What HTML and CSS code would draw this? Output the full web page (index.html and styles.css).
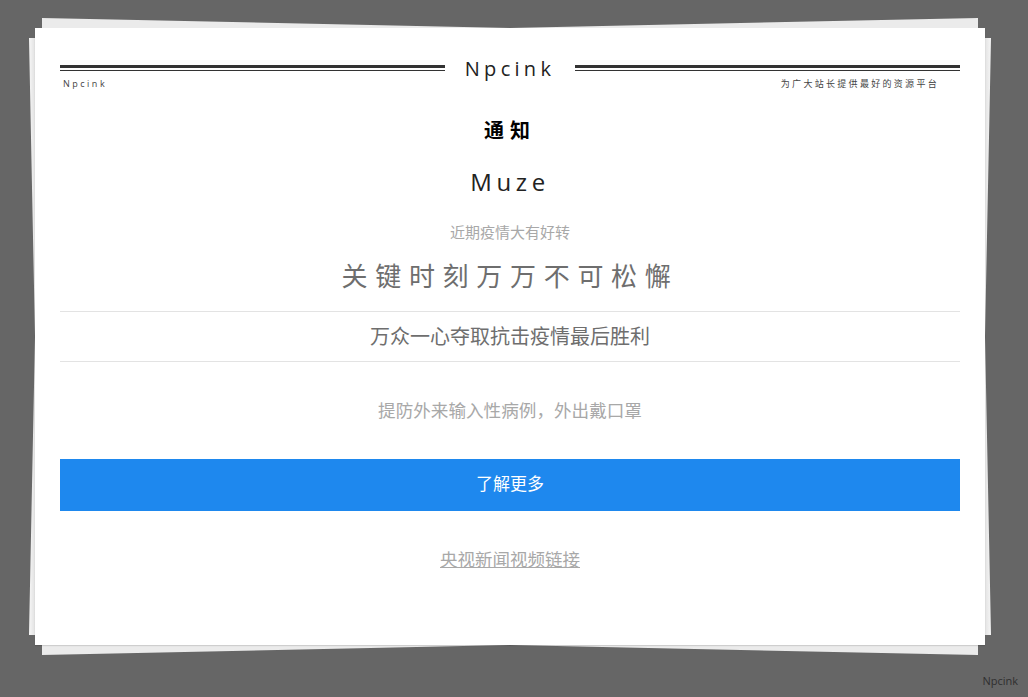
FILE: index.html
```html
<!DOCTYPE html>
<html lang="zh-CN">
<head>
	<meta charset="UTF-8">
	<title>Npcink</title>
	<link rel="stylesheet" href="styles.css">
</head>
<body>
	<div class="desk">
		<div class="paper">
			<div class="masthead">
				<span class="rule"></span>
				<span class="brand">Npcink</span>
				<span class="rule"></span>
			</div>
			<div class="subhead">
				<span class="subhead-left">Npcink</span>
				<span class="subhead-right">为广大站长提供最好的资源平台</span>
			</div>
			<h1 class="notice">通知</h1>
			<div class="author">Muze</div>
			<p class="lead">近期疫情大有好转</p>
			<h2 class="headline">关键时刻万万不可松懈</h2>
			<div class="slogan">万众一心夺取抗击疫情最后胜利</div>
			<p class="advice">提防外来输入性病例，外出戴口罩</p>
			<a class="button" href="#">了解更多</a>
			<a class="video-link" href="#">央视新闻视频链接</a>
		</div>
	</div>
	<div class="credit">Npcink</div>
</body>
</html>
```

FILE: styles.css
```css
html, body {
	height: 100%;
}

body {
	margin: 0;
	background: #666;
	font-family: "Open Sans", "Noto Sans CJK SC", sans-serif;
	position: relative;
	overflow: hidden;
}

.desk {
	position: relative;
	z-index: 0;
	width: 950px;
	height: 617px;
	margin: 28px 0 0 35px;
}

/* the two sheets peeking out behind the page */
.desk::before {
	content: "";
	position: absolute;
	z-index: -1;
	left: 7px;
	top: -10px;
	width: 936px;
	height: 637px;
	background: #ebebeb;
	clip-path: polygon(0 0, 50% 10px, 100% 0, 100% 100%, 50% 627px, 0 100%);
}

.desk::after {
	content: "";
	position: absolute;
	z-index: -1;
	left: -6px;
	top: 10px;
	width: 962px;
	height: 597px;
	background: linear-gradient(to right, #f6f6f6, #e2e2e2 6px, #e2e2e2 956px, #f6f6f6);
	clip-path: polygon(0 0, 6px 50%, 0 100%, 100% 100%, 956px 50%, 100% 0);
}

.paper {
	box-sizing: border-box;
	height: 617px;
	padding: 37px 25px 0;
	background: #fff;
	box-shadow: 0 1px 1px rgba(0, 0, 0, 0.12);
	text-align: center;
}

.masthead {
	display: flex;
	align-items: flex-start;
}

.rule {
	flex: 1;
	height: 2px;
	border-top: 3px solid #333;
	border-bottom: 1px solid #333;
}

.brand {
	width: 130px;
	margin-top: -10px;
	font-size: 20px;
	line-height: 28px;
	letter-spacing: 4.3px;
	color: #222;
}

.subhead {
	display: flex;
	justify-content: space-between;
	margin-top: -6px;
	font-size: 9px;
	line-height: 14px;
	color: #444;
}

.subhead-left {
	margin-left: 3px;
	letter-spacing: 2.5px;
}

.subhead-right {
	margin-right: 21px;
	letter-spacing: 2.3px;
}

.notice {
	margin: 26px 0 0;
	font-size: 20px;
	line-height: 28px;
	letter-spacing: 6px;
	font-weight: 700;
	color: #000;
}

.author {
	margin-top: 20px;
	font-size: 24px;
	line-height: 34px;
	letter-spacing: 4.6px;
	color: #222;
}

.lead {
	margin: 22px 0 0;
	font-size: 15px;
	line-height: 22px;
	color: #a8a8a8;
}

.headline {
	margin: 13px 0 0;
	font-size: 26px;
	line-height: 40px;
	font-weight: 400;
	letter-spacing: 7.7px;
	color: #6e6e6e;
}

.slogan {
	margin-top: 15px;
	height: 49px;
	border-top: 1px solid #e3e3e3;
	border-bottom: 1px solid #e3e3e3;
	font-size: 20px;
	line-height: 49px;
	color: #6e6e6e;
}

.advice {
	margin: 35px 0 0;
	font-size: 17.6px;
	line-height: 26px;
	color: #a8a8a8;
}

.button {
	display: block;
	margin-top: 36px;
	height: 52px;
	background: #1e88ee;
	font-size: 17px;
	line-height: 49px;
	color: #fff;
	text-decoration: none;
}

.video-link {
	display: inline-block;
	margin-top: 35px;
	font-size: 17.5px;
	line-height: 26px;
	color: #a8a8a8;
}

.credit {
	position: absolute;
	right: 10px;
	bottom: 9px;
	font-size: 11px;
	line-height: 14px;
	color: #2f2f2f;
}
```
